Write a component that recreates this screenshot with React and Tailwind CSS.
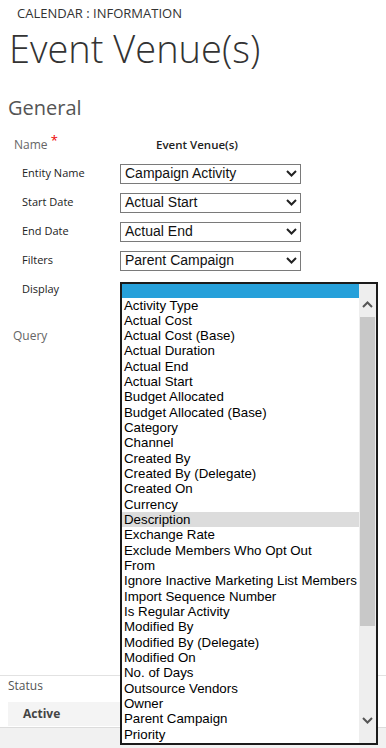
import React from "react";

const seg = { fontFamily: '"Open Sans", "Noto Sans", sans-serif' };
const arial = { fontFamily: '"Liberation Sans", Arial, sans-serif' };

const fields = [
  ["Entity Name", "Campaign Activity"],
  ["Start Date", "Actual Start"],
  ["End Date", "Actual End"],
  ["Filters", "Parent Campaign"],
];

const options = [
  "Activity Type",
  "Actual Cost",
  "Actual Cost (Base)",
  "Actual Duration",
  "Actual End",
  "Actual Start",
  "Budget Allocated",
  "Budget Allocated (Base)",
  "Category",
  "Channel",
  "Created By",
  "Created By (Delegate)",
  "Created On",
  "Currency",
  "Description",
  "Exchange Rate",
  "Exclude Members Who Opt Out",
  "From",
  "Ignore Inactive Marketing List Members",
  "Import Sequence Number",
  "Is Regular Activity",
  "Modified By",
  "Modified By (Delegate)",
  "Modified On",
  "No. of Days",
  "Outsource Vendors",
  "Owner",
  "Parent Campaign",
  "Priority",
];

const Chevron = ({ up = false, className = "" }) => (
  <svg width="11" height="7" viewBox="0 0 11 7" className={className}>
    <path
      d={up ? "M1 6 L5.5 1.5 L10 6" : "M1 1 L5.5 5.5 L10 1"}
      fill="none"
      stroke="currentColor"
      strokeWidth="2"
    />
  </svg>
);

const App = () => {
  return (
    <div className="relative w-[386px] h-[748px] overflow-hidden bg-white" style={seg}>
      {/* Header */}
      <div className="pl-[17px] pt-[5px] text-[13px] leading-[16px] text-[#333]">
        CALENDAR : INFORMATION
      </div>
      <h1 className="pl-[9px] mt-[4px] text-[38px] leading-[46px] font-light text-[#333]">
        Event Venue(s)
      </h1>

      <div className="pl-[8px] mt-[24px] text-[20px] leading-[26px] text-[#555]">General</div>

      {/* Form */}
      <div className="mt-[9px]">
        <div className="flex items-center h-[29px]">
          <div className="w-[120px] pl-[14px] text-[12px] text-[#666]">
            Name <span className="text-[#e00] text-[13px] relative -top-[4px]">*</span>
          </div>
          <div className="w-[154px] text-center text-[11.5px] font-semibold text-[#222]">
            Event Venue(s)
          </div>
        </div>

        {fields.map(([label, value]) => (
          <div key={label} className="flex items-center h-[29px]">
            <div className="w-[120px] pl-[22px] text-[11px] text-[#222]">{label}</div>
            <div
              className="flex items-center justify-between w-[181px] h-[20px] border border-[#7a7a7a] pl-[4px] pr-[3px] text-[14px] text-[#111]"
              style={arial}
            >
              <span>{value}</span>
              <Chevron className="text-[#222]" />
            </div>
          </div>
        ))}

        <div className="flex items-center h-[29px]">
          <div className="w-[120px] pl-[22px] text-[11px] text-[#222]">Display</div>
        </div>

        <div className="pl-[13px] mt-[23px] text-[12px] text-[#666]">Query</div>
      </div>

      {/* Status footer */}
      <div className="absolute left-0 right-0 top-[675px] border-t border-[#e2e2e2]">
        <div className="pl-[8px] pt-[1px] h-[26px] text-[12px] leading-[18px] text-[#555]">Status</div>
        <div className="flex items-center mx-[8px] h-[24px] bg-[#f4f4f4] pl-[15px] text-[12px] font-bold text-[#444]">
          Active
        </div>
        <div className="border-t border-[#dcdcdc] bg-[#f1f1f1] h-[30px] mt-[1px]" />
      </div>

      {/* Open dropdown list */}
      <div
        className="absolute left-[120px] top-[282px] w-[258px] h-[463px] border-2 border-[#1b1b1b] bg-white flex"
        style={arial}
      >
        <div className="w-[237px] overflow-hidden text-[13.3px] leading-[15.33px] text-black">
          <div className="h-[13.5px] bg-[#26a0da]" />
          {options.map((o) => (
            <div
              key={o}
              className={`pl-[2px] h-[15.33px] whitespace-nowrap ${o === "Description" ? "bg-[#dcdcdc]" : ""}`}
            >
              {o}
            </div>
          ))}
        </div>
        <div className="flex-1 bg-[#eeeeee] flex flex-col items-center">
          <div className="h-[33px] flex items-start pt-[17px] justify-center text-[#555]">
            <Chevron up />
          </div>
          <div className="w-[15px] h-[309px] bg-[#c8c8c8]" />
          <div className="flex-1" />
          <div className="h-[44px] flex items-start pt-[18px] justify-center text-[#555]">
            <Chevron />
          </div>
        </div>
      </div>
    </div>
  );
};

export default App;
